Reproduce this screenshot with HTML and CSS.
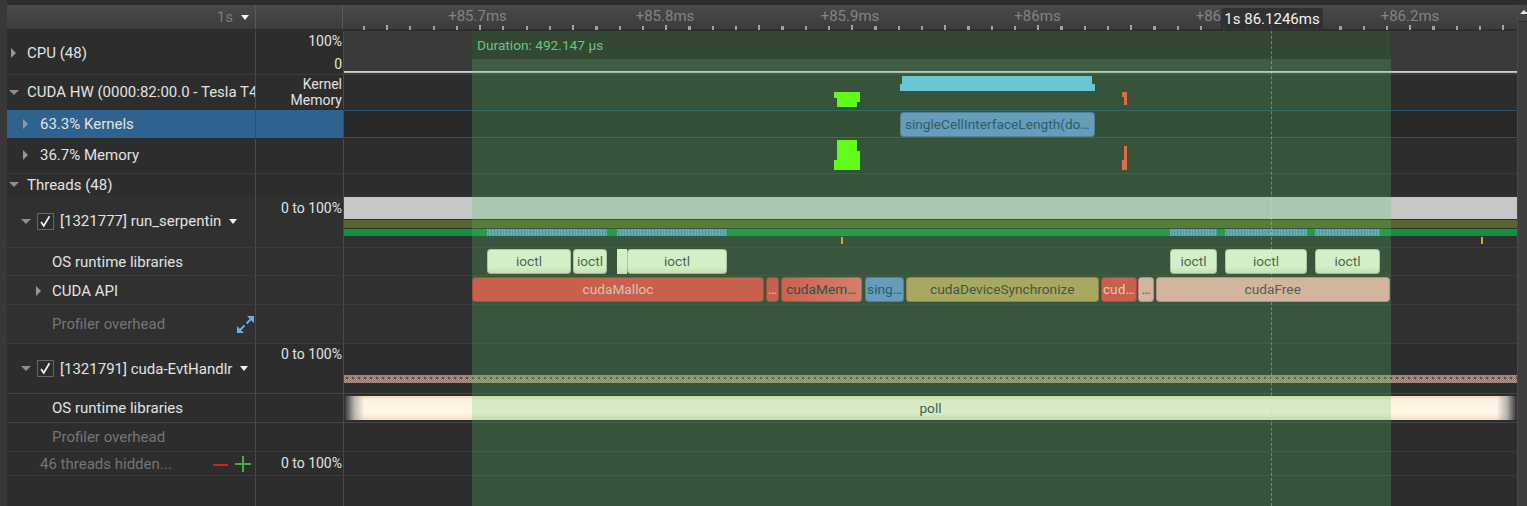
FILE: index.html
```html
<!DOCTYPE html>
<html lang="en">
<head>
<meta charset="utf-8">
<title>Timeline</title>
<link rel="stylesheet" href="styles.css">
</head>
<body>
<div class="app">
  <div class="gutter"></div>
  <main class="main">
    <header class="header">
      <div class="hcell hname"><span>1s</span><i class="caret white"></i></div>
      <div class="hcell haxis"></div>
      <div class="ruler">
        <span class="tick-label" style="left:134.5px">+85.7ms</span>
        <span class="tick-label" style="left:322px">+85.8ms</span>
        <span class="tick-label" style="left:507px">+85.9ms</span>
        <span class="tick-label" style="left:694.5px">+86ms</span>
        <span class="tick-label" style="left:882px">+86.1ms</span>
        <span class="tick-label" style="left:1067px">+86.2ms</span>
      </div>
    </header>
    <div class="rows">
      <div class="row h-cpu">
        <div class="name"><i class="tri-r at-11"></i><span class="at-27">CPU (48)</span></div>
        <div class="axis split"><span>100%</span><span>0</span></div>
        <div class="track cpu-track"><div class="cpu-line"></div></div>
      </div>
      <div class="row h-hw">
        <div class="name"><i class="caret grey at-8"></i><span class="at-27">CUDA HW (0000:82:00.0 - Tesla T4)</span></div>
        <div class="axis stack"><span>Kernel</span><span>Memory</span></div>
        <div class="track">
          <div class="block cyan" style="left:558px;width:190px;top:1px;height:9px"></div>
          <div class="block cyan" style="left:555.5px;width:195.5px;top:9px;height:7px"></div>
          <div class="block lime" style="left:490px;width:26px;top:17px;height:6px"></div>
          <div class="block lime" style="left:493px;width:23px;top:23px;height:4px"></div>
          <div class="block lime" style="left:493px;width:20px;top:27px;height:5px"></div>
          <div class="block red" style="left:778px;width:5px;top:17px;height:5px"></div>
          <div class="block red" style="left:780px;width:3px;top:22px;height:8px"></div>
        </div>
      </div>
      <div class="row h-kernels selected">
        <div class="name"><i class="tri-r at-23"></i><span class="at-40">63.3% Kernels</span></div>
        <div class="axis"></div>
        <div class="track kernel-track">
          <div class="seg blue lane-kernel" style="left:555.5px;width:195.5px">singleCellInterfaceLength(do…</div>
        </div>
      </div>
      <div class="row h-memory">
        <div class="name"><i class="tri-r at-23"></i><span class="at-40">36.7% Memory</span></div>
        <div class="axis"></div>
        <div class="track">
          <div class="block lime" style="left:493px;width:20px;top:1px;height:11px"></div>
          <div class="block lime" style="left:493px;width:23px;top:12px;height:9px"></div>
          <div class="block lime" style="left:490px;width:26px;top:21px;height:10px"></div>
          <div class="block red" style="left:780px;width:3px;top:7px;height:14px"></div>
          <div class="block red" style="left:778px;width:5px;top:21px;height:10px"></div>
        </div>
      </div>
      <div class="row h-threads">
        <div class="name"><i class="caret grey at-8"></i><span class="at-27">Threads (48)</span></div>
        <div class="axis"></div>
        <div class="track"></div>
      </div>
      <div class="row h-thread1 lighter">
        <div class="name">
          <i class="caret grey at-21"></i>
          <span class="check at-37"><svg viewBox="0 0 17 17" width="15" height="15"><path d="M3.5 9l3 4.5L13 2.5" fill="none" stroke="#f2f2f2" stroke-width="2"/></svg></span>
          <span class="at-60">[1321777] run_serpentin</span><i class="caret white after"></i>
        </div>
        <div class="axis top-6"><span>0 to 100%</span></div>
        <div class="track">
          <div class="block greybar"></div>
          <div class="block olive"></div>
          <div class="block green"></div>
          <div class="block hatch" style="left:143px;width:120px"></div>
          <div class="block hatch" style="left:273px;width:110px"></div>
          <div class="block hatch" style="left:826px;width:47px"></div>
          <div class="block hatch" style="left:881px;width:82px"></div>
          <div class="block hatch" style="left:971px;width:65px"></div>
          <div class="block mark" style="left:497px"></div>
          <div class="block mark" style="left:1137px"></div>
        </div>
      </div>
      <div class="row h-os lighter">
        <div class="name"><span class="at-52">OS runtime libraries</span></div>
        <div class="axis"></div>
        <div class="track">
          <div class="seg pale lane-os" style="left:143px;width:84px">ioctl</div>
          <div class="seg pale lane-os" style="left:229px;width:34px">ioctl</div>
          <div class="seg pale lane-os square" style="left:273px;width:10px"></div>
          <div class="seg pale lane-os" style="left:283px;width:100px">ioctl</div>
          <div class="seg pale lane-os" style="left:826px;width:47px">ioctl</div>
          <div class="seg pale lane-os" style="left:881px;width:82px">ioctl</div>
          <div class="seg pale lane-os" style="left:971px;width:65px">ioctl</div>
        </div>
      </div>
      <div class="row h-api lighter">
        <div class="name"><i class="tri-r at-36"></i><span class="at-52">CUDA API</span></div>
        <div class="axis"></div>
        <div class="track">
          <div class="seg coral lane-api" style="left:128px;width:292px">cudaMalloc</div>
          <div class="seg coral lane-api" style="left:422px;width:13px">…</div>
          <div class="seg salmon lane-api" style="left:436.5px;width:81.5px">cudaMem…</div>
          <div class="seg blue lane-api" style="left:521px;width:39px">sing…</div>
          <div class="seg khaki lane-api" style="left:561.5px;width:193.5px">cudaDeviceSynchronize</div>
          <div class="seg coral dark-text lane-api" style="left:756.5px;width:36.5px">cud…</div>
          <div class="seg tan lane-api" style="left:794px;width:16px">…</div>
          <div class="seg tan lane-api" style="left:811.5px;width:234.5px">cudaFree</div>
        </div>
      </div>
      <div class="row h-prof1 lighter">
        <div class="name"><span class="at-52 dim">Profiler overhead</span>
          <svg class="expand" viewBox="0 0 17 17" width="17" height="17"><path d="M0 17V10l7 7z M17 0v7L10 0z" fill="#6aaee0"/><path d="M2.5 14.5L7.5 9.5 M14.500 2.500L9.500 7.500" fill="none" stroke="#6aaee0" stroke-width="2"/></svg>
        </div>
        <div class="axis"></div>
        <div class="track"></div>
      </div>
      <div class="row h-thread2">
        <div class="name">
          <i class="caret grey at-21"></i>
          <span class="check at-37"><svg viewBox="0 0 17 17" width="15" height="15"><path d="M3.5 9l3 4.5L13 2.5" fill="none" stroke="#f2f2f2" stroke-width="2"/></svg></span>
          <span class="at-60">[1321791] cuda-EvtHandlr</span><i class="caret white after"></i>
        </div>
        <div class="axis top-3"><span>0 to 100%</span></div>
        <div class="track"><div class="block pinkhatch"></div></div>
      </div>
      <div class="row h-os2">
        <div class="name"><span class="at-52">OS runtime libraries</span></div>
        <div class="axis"></div>
        <div class="track"><div class="block poll">poll</div></div>
      </div>
      <div class="row h-prof2">
        <div class="name"><span class="at-52 dim">Profiler overhead</span></div>
        <div class="axis"></div>
        <div class="track"></div>
      </div>
      <div class="row h-hidden">
        <div class="name"><span class="at-40 dim">46 threads hidden...</span>
          <span class="minus"></span><span class="plus"></span>
        </div>
        <div class="axis"><span>0 to 100%</span></div>
        <div class="track"></div>
      </div>
      <div class="row filler">
        <div class="name"></div><div class="axis"></div><div class="track"></div>
      </div>
      <div class="selection"><div class="duration">Duration: 492.147 µs</div></div>
      <div class="cursor"></div>
    </div>
    <div class="tooltip">1s 86.1246ms</div>
  </main>
  <aside class="scrollbar"><div class="sb-up"></div></aside>
</div>
</body>
</html>
```

FILE: styles.css
```css
* { box-sizing: border-box; }
html, body { margin: 0; height: 100%; overflow: hidden; }
body {
  background: #2a2a2a;
  color: #e2e2e2;
  font: 15px/16px Roboto, "Liberation Sans", sans-serif;
}
.app { display: flex; height: 506px; padding-top: 5px; background: #2d2d2d; }
.gutter { width: 7px; background: #383838; margin-top: -5px; flex: none; }
.main { width: 1510px; flex: none; position: relative; }
.scrollbar { width: 10px; flex: none; background: #3e3e3e; border-left: 1px solid #4a4a4a; }
.sb-up { height: 17px; background: #454545; position: relative; border-bottom: 1px solid #2d2d2d; }
.sb-up::after {
  content: ""; position: absolute; left: 2px; top: 5px;
  border-left: 4px solid transparent; border-right: 4px solid transparent; border-bottom: 4px solid #e8e8e8;
}

/* header */
.header { display: grid; grid-template-columns: 249px 87px 1174px; height: 24px; margin-bottom: 2px; background: linear-gradient(#4a4a4a, #3c3c3c); }
.hcell { border-right: 1px solid #5a5a5a; }
.hname { display: flex; align-items: center; justify-content: flex-end; gap: 8px; padding-right: 6px; color: #7c7c7c; }
.ruler { position: relative; }
.ruler::after {
  content: ""; position: absolute; left: 0; right: 0; bottom: -1px; height: 4px;
  background: repeating-linear-gradient(90deg, #a0a0a0 20px, #a0a0a0 22px, transparent 22px, transparent 43.25px);
}
.ruler::before {
  content: ""; position: absolute; left: 0; right: 0; bottom: -1px; height: 5px;
  background: repeating-linear-gradient(90deg, #b0b0b0 43px, #b0b0b0 45px, transparent 45px, transparent 136px);
}
.tick-label { position: absolute; top: 3px; transform: translateX(-50%); color: #838383; white-space: nowrap; }

/* rows */
.rows { position: relative; height: 475px; overflow: hidden; }
.row { display: grid; grid-template-columns: 249px 88px 1173px; border-bottom: 1px solid #3b3b3b; }
.h-cpu { height: 44px; }
.h-hw { height: 35px; border-bottom-color: #2a2a2a; }
.h-kernels { height: 29px; border-bottom-color: #2a2a2a; }
.h-memory { height: 35px; }
.h-threads { height: 21px; border-bottom: 0; }
.h-thread1 { height: 53px; }
.h-os { height: 28px; }
.h-api { height: 29px; }
.h-prof1 { height: 39px; }
.h-thread2 { height: 50px; border-bottom-color: #444; }
.h-os2 { height: 29px; border-bottom-color: #444; }
.h-prof2 { height: 29px; }
.h-hidden { height: 24px; }
.filler { height: 30px; border-bottom: 0; }
.lighter { background: #303030; }

.name { position: relative; display: flex; align-items: center; border-right: 1px solid #4a4a4a; white-space: nowrap; overflow: hidden; }
.h-memory .name { padding-bottom: 2px; }
.h-api .name { padding-top: 2px; }
.axis { border-right: 1px solid #4a4a4a; display: flex; flex-direction: column; align-items: flex-end; justify-content: center; padding-right: 1px; font-size: 14px; }
.axis.split { justify-content: space-between; padding-top: 2px; padding-bottom: 2px; }
.axis.top-6 { justify-content: flex-start; padding-top: 5px; }
.axis.top-3 { justify-content: flex-start; padding-top: 2px; }
.h-hidden .axis { padding-bottom: 2px; }
.track { position: relative; }

.selected .name, .selected .axis { background: #30628f; border-right-color: #28507a; }
.kernel-track { border-top: 1px solid #2a4f6f; border-bottom: 1px solid #2a4f6f; background: #282828; }
.cpu-track { background: #3a3a3a; }
.cpu-line { position: absolute; left: 0; right: 0; top: 40px; height: 2px; background: linear-gradient(#dcdcdc, #a8a8a8); }

/* name column offsets (x minus the 7px gutter) */
.name > * { position: absolute; }
.at-8 { left: 2px; }
.at-11 { left: 4px; }
.at-21 { left: 14px; }
.at-23 { left: 16px; }
.at-27 { left: 20px; }
.at-36 { left: 29px; }
.at-37 { left: 30px; }
.at-40 { left: 33px; }
.at-52 { left: 45px; }
.at-60 { left: 53px; }
.dim { color: #757575; }

.tri-r { width: 0; height: 0; border-top: 5px solid transparent; border-bottom: 5px solid transparent; border-left: 5px solid #969696; }
.caret { width: 0; height: 0; display: inline-block; border-left: 5px solid transparent; border-right: 5px solid transparent; border-top: 5px solid #8e8e8e; }
.caret.white { border-top-color: #f0f0f0; border-left-width: 4px; border-right-width: 4px; }
.h-thread1 .after { left: 222px; }
.h-thread2 .after { left: 233px; }
.check { width: 17px; height: 17px; border: 1px solid #666; background: #2c2c2c; display: flex; }
.expand { left: 230px; top: 11px; }
.minus { left: 206px; top: 12px; width: 15px; height: 2px; background: #d81f1f; }
.plus { left: 228px; top: 4px; width: 16px; height: 16px;
  background: linear-gradient(#44ad44, #44ad44) center/16px 2px no-repeat, linear-gradient(#44ad44, #44ad44) center/2px 16px no-repeat; }

/* timeline canvas */
.block { position: absolute; }
.cyan { background: #6cc5d3; z-index: 2; }
.lime { background: #60fb1a; z-index: 2; }
.red { background: #df6b4c; z-index: 2; }
.greybar { left: 0; right: 0; top: 2px; height: 22px; background: #c6c6c6; }
.olive { left: 0; right: 0; top: 25px; height: 8px; background: #56652f; }
.green { left: 0; right: 0; top: 34px; height: 7px; background: #128f41; }
.hatch { top: 34px; height: 7px; z-index: 2; background: repeating-conic-gradient(#4d9aa5 0 25%, #6bb4bd 0 50%) 0 0 / 3px 3px; }
.mark { top: 42px; height: 7px; width: 2px; background: #dba322; z-index: 2; }
.pinkhatch {
  left: 0; right: 0; top: 31px; height: 8px;
  background:
    radial-gradient(circle at 3px 3px, #5a4a40 1.3px, transparent 1.6px) 0 0 / 6px 6px,
    repeating-conic-gradient(#8a7265 0 25%, #b79c8c 0 50%) 0 0 / 2px 2px;
}
.poll {
  left: 0; right: 0; top: 2px; height: 24px; text-align: center; line-height: 24px; color: #3e3c42; font-size: 13.7px;
  background:
    linear-gradient(90deg, #2c2c2c 0, rgba(150,150,150,.7) 10px, rgba(255,255,255,0) 20px, rgba(255,255,255,0) calc(100% - 20px), rgba(150,150,150,.7) calc(100% - 10px), #2c2c2c 100%),
    linear-gradient(#f2d9b8, #fff1df 4px, #fff6ea 70%, #f2dfc6);
}
.seg {
  position: absolute; z-index: 2; text-align: center; white-space: nowrap; overflow: hidden;
  border-radius: 4px; box-shadow: inset 0 0 0 1px rgba(0,0,0,.18); font-size: 13.7px; color: #3d5a42;
}
.seg.square { border-radius: 0; box-shadow: none; }
.lane-kernel, .lane-os, .lane-api { top: 1px; height: 25px; line-height: 24px; }
.pale { background: linear-gradient(#d6efc6, #d4efc8 70%, #c6dfae); color: #4a6b50; }
.coral { background: #c8604e; color: #dcc2ac; }
.coral.dark-text { color: #e6c9b4; }
.salmon { background: linear-gradient(90deg, #c9634f, #d4806c); color: #3a4f3f; }
.blue { background: #669cbc; color: #2d5c68; }
.khaki { background: #a9a85f; color: #3d5a40; }
.tan { background: #d4b49f; color: #52604d; }

.selection { position: absolute; left: 465px; top: 0; width: 919px; bottom: 0; background: rgba(87, 206, 99, .244); z-index: 1; }
.duration { height: 28px; line-height: 28px; padding-left: 5px; font-size: 13.7px; color: #72c180; background: rgba(0, 0, 0, .22); }
.cursor { position: absolute; left: 1264px; top: 0; bottom: 0; border-left: 1px dashed rgba(210, 210, 210, .42); z-index: 3; }
.tooltip { position: absolute; left: 1214px; top: 3px; width: 102px; height: 23px; line-height: 23px; text-align: center; background: rgba(48, 48, 48, .94); border-radius: 3px; color: #f2f2f2; z-index: 4; white-space: nowrap; }
```
